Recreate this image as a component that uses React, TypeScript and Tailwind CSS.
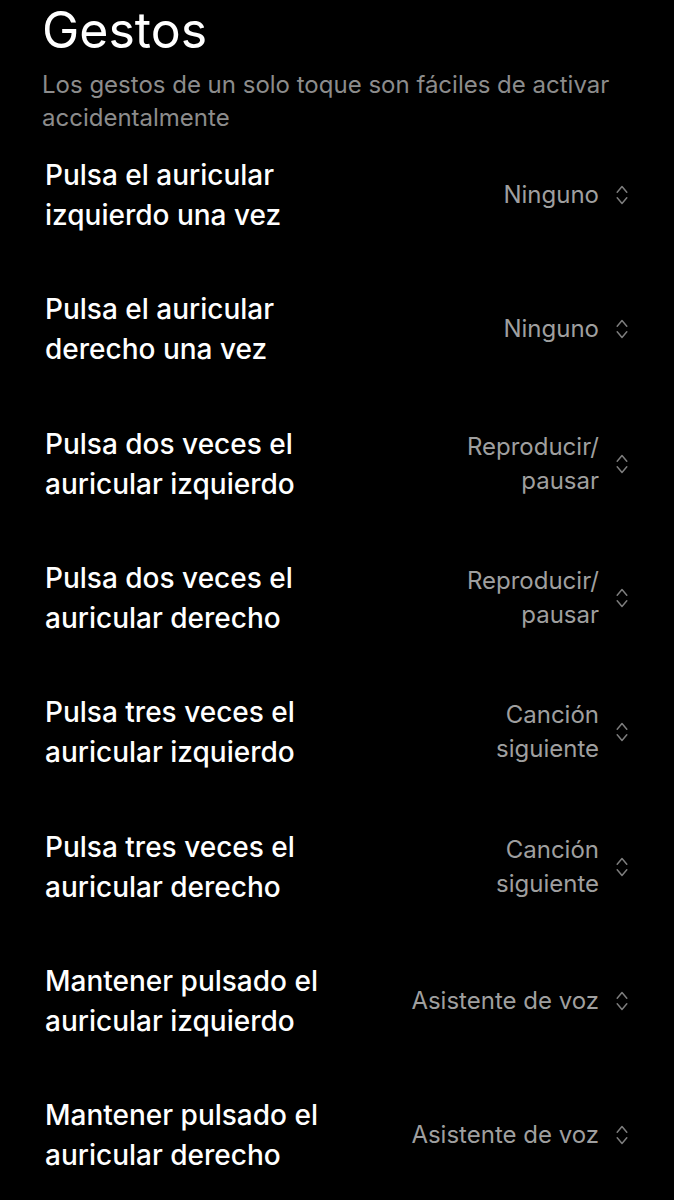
import React from "react";

const rows: { label: [string, string]; value: string[] }[] = [
  { label: ["Pulsa el auricular", "izquierdo una vez"], value: ["Ninguno"] },
  { label: ["Pulsa el auricular", "derecho una vez"], value: ["Ninguno"] },
  { label: ["Pulsa dos veces el", "auricular izquierdo"], value: ["Reproducir/", "pausar"] },
  { label: ["Pulsa dos veces el", "auricular derecho"], value: ["Reproducir/", "pausar"] },
  { label: ["Pulsa tres veces el", "auricular izquierdo"], value: ["Canción", "siguiente"] },
  { label: ["Pulsa tres veces el", "auricular derecho"], value: ["Canción", "siguiente"] },
  { label: ["Mantener pulsado el", "auricular izquierdo"], value: ["Asistente de voz"] },
  { label: ["Mantener pulsado el", "auricular derecho"], value: ["Asistente de voz"] },
];

function UpDown() {
  return (
    <svg width="12" height="24" viewBox="0 0 12 24" fill="none" className="shrink-0">
      <path d="M1.2 9.2 L6 3.6 L10.8 9.2" stroke="#7d7d7d" strokeWidth="1.5" strokeLinecap="round" strokeLinejoin="round" />
      <path d="M1.2 14.8 L6 20.4 L10.8 14.8" stroke="#7d7d7d" strokeWidth="1.5" strokeLinecap="round" strokeLinejoin="round" />
    </svg>
  );
}

export default function App() {
  return (
    <div
      className="w-[674px] min-h-[1200px] bg-black text-white overflow-hidden"
      style={{ fontFamily: "Inter, Roboto, 'Noto Sans', 'Liberation Sans', sans-serif" }}
    >
      <div className="pl-[42px] pr-[46px]">
        <h1 className="pt-[1px] text-[50px] leading-[58px] font-normal text-white">Gestos</h1>
        <p className="mt-[9px] text-[24px] leading-[33px] text-[#8c8c8c]">
          Los gestos de un solo toque son fáciles de activar
          <br />
          accidentalmente
        </p>
        <div className="-mt-[6px] flex flex-col">
          {rows.map((r, i) => (
            <div key={i} className="h-[134.3px] flex items-center justify-between pl-[3px]">
              <div className="text-[28px] leading-[40px] font-medium text-white">
                <div>{r.label[0]}</div>
                <div>{r.label[1]}</div>
              </div>
              <div className="flex items-center gap-[17px]">
                <div className="text-right text-[24px] leading-[34px] text-[#9f9f9f]">
                  {r.value.map((v, j) => (
                    <div key={j}>{v}</div>
                  ))}
                </div>
                <UpDown />
              </div>
            </div>
          ))}
        </div>
      </div>
    </div>
  );
}
